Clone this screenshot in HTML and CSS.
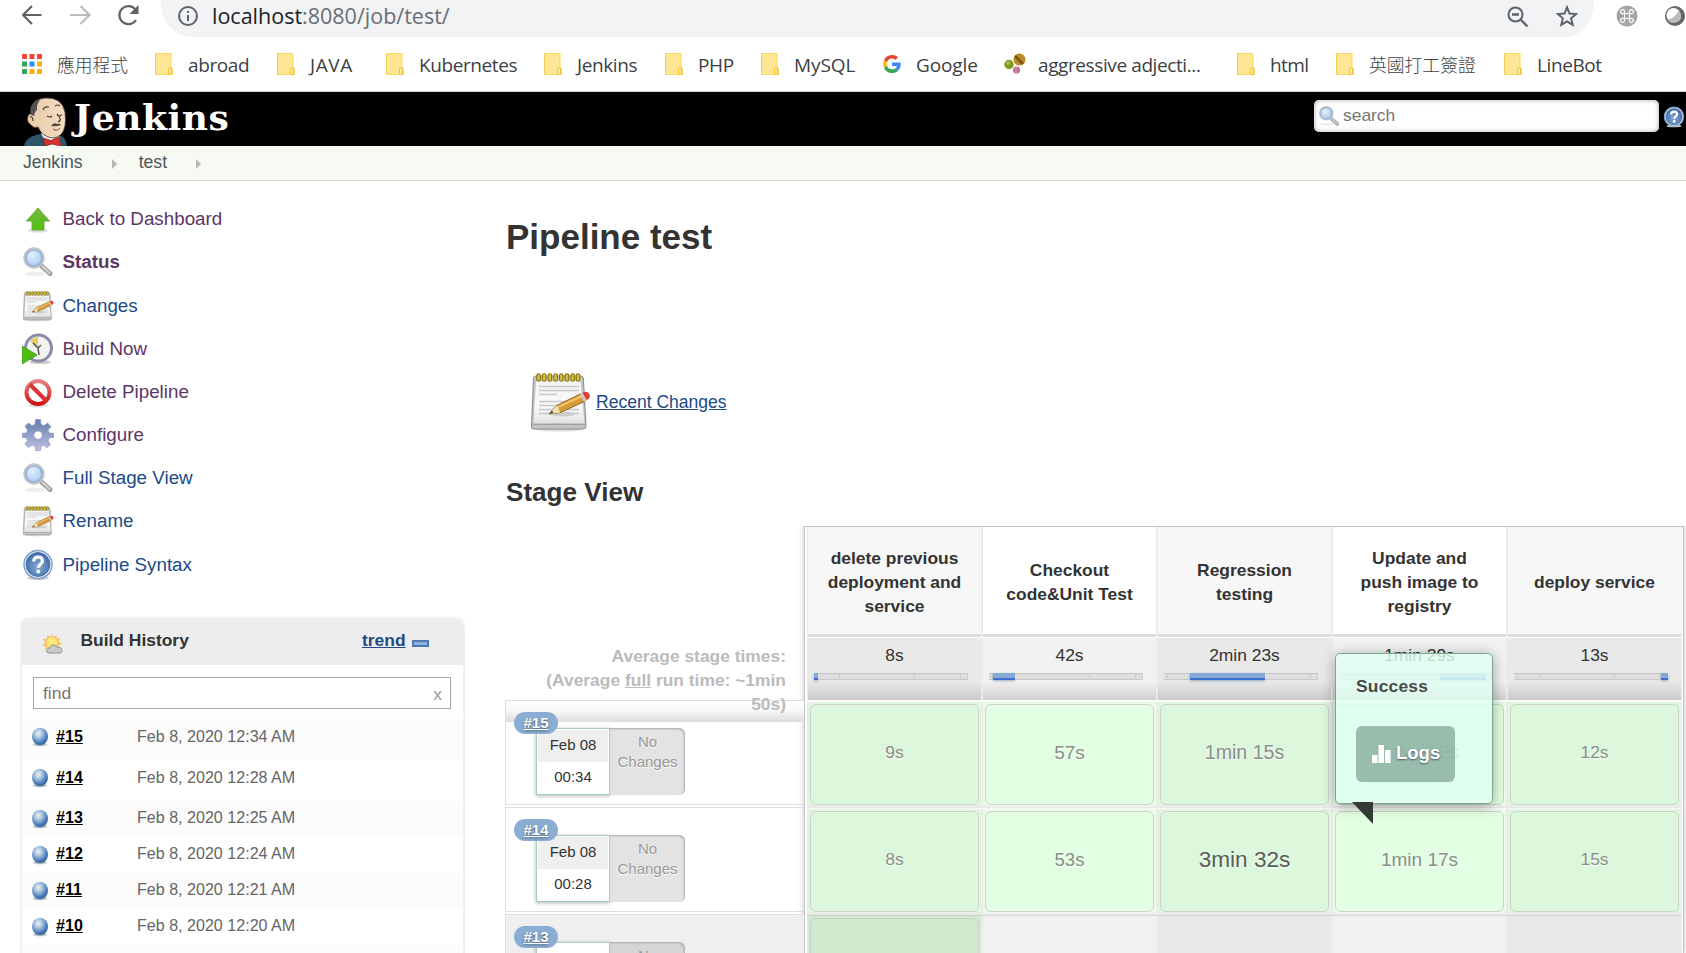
FILE: index.html
```html
<!DOCTYPE html>
<html lang="en">
<head>
<meta charset="utf-8">
<title>test [Jenkins]</title>
<link rel="stylesheet" href="styles.css">
</head>
<body>
<svg class="defs" width="0" height="0" aria-hidden="true">
  <defs>
    <linearGradient id="gUp" x1="0" y1="0" x2="0" y2="1"><stop offset="0" stop-color="#76b544"/><stop offset="1" stop-color="#4ec40c"/></linearGradient>
    <radialGradient id="gLens" cx=".4" cy=".35" r=".7"><stop offset="0" stop-color="#e3effb"/><stop offset="1" stop-color="#a4c6ea"/></radialGradient>
    <linearGradient id="gPage" x1="0" y1="0" x2="0" y2="1"><stop offset="0" stop-color="#f3f3f3"/><stop offset=".6" stop-color="#fbfbfb"/><stop offset="1" stop-color="#e2e2e2"/></linearGradient>
    <linearGradient id="gNo" x1="0" y1="0" x2="0" y2="1"><stop offset="0" stop-color="#e88080"/><stop offset="1" stop-color="#cf1111"/></linearGradient>
    <linearGradient id="gGear" x1="0" y1="0" x2="0" y2="1"><stop offset="0" stop-color="#5f7fae"/><stop offset="1" stop-color="#c3bfe0"/></linearGradient>
    <radialGradient id="gHelp" cx=".5" cy=".6" r=".6"><stop offset="0" stop-color="#84a9d6"/><stop offset="1" stop-color="#3d6ba6"/></radialGradient>
    <radialGradient id="gBall" cx=".4" cy=".33" r=".68"><stop offset="0" stop-color="#f0f0e6"/><stop offset=".35" stop-color="#a9c6e2"/><stop offset=".8" stop-color="#4577b6"/><stop offset="1" stop-color="#3766a5"/></radialGradient>
    <linearGradient id="gSkin" x1="0" y1="0" x2="1" y2="0"><stop offset="0" stop-color="#e8cba9"/><stop offset="1" stop-color="#f3dcc0"/></linearGradient>
    <symbol id="folder" viewBox="0 0 18 22"><path d="M.5.5h15.500v14l1.500 1v6H.5z" fill="#ffe694" stroke="#fbd75b"/><path d="M.5.5v21" stroke="#f0cc50"/><path d="M13.600 21.300v-5.200a1.400 1.400 0 0 1 2.800 0v5.200z" fill="#ffeeb0" stroke="#eec02f"/></symbol>
    <symbol id="search" viewBox="0 0 32 32"><ellipse cx="13" cy="28" rx="10" ry="2" fill="#eee"/><path d="M19.500 20l8.500 7.500" stroke="#999" stroke-width="5" stroke-linecap="round"/><path d="M20.500 20.500l7 6.500" stroke="#cfcfcf" stroke-width="2.500" stroke-linecap="round"/><circle cx="12" cy="12" r="9.500" fill="url(#gLens)" stroke="#c3c5c7" stroke-width="2.400"/><circle cx="12" cy="12" r="8" fill="none" stroke="#7fa7d8" stroke-width="1.200"/></symbol>
    <symbol id="notepad" viewBox="0 0 62 62"><ellipse cx="30" cy="58.500" rx="23" ry="2" fill="#ddd"/><path d="M7 5h45q2 0 2.300 2L57 55q0 3-3 3H5q-3 0-2.500-3L4.500 7Q5 5 7 5z" fill="#c4c4c4" stroke="#8a8a8a"/><path d="M7 10h44.500l4 42H4.500z" fill="url(#gPage)"/><path d="M4 53.500h52" stroke="#a0a0a0"/><path d="M10 15.500h40M10 19.500h40M10 23.500h18M10 30.500h33M10 34.500h26M10 38.500h17M10 42.500h16M36 38.500h14M34 42.500h16" stroke="#c8c8c8" stroke-width="1.500"/><path d="M9.500 4.500v4M15.200 4.500v4M20.900 4.500v4M26.600 4.500v4M32.300 4.500v4M38 4.500v4M43.700 4.500v4M49 4.500v4" stroke="#857311" stroke-width="4.600" stroke-linecap="round"/><path d="M9.500 4.500v4M15.200 4.500v4M20.900 4.500v4M26.600 4.500v4M32.300 4.500v4M38 4.500v4M43.700 4.500v4M49 4.500v4" stroke="#d6bf3c" stroke-width="2.500" stroke-linecap="round"/><ellipse cx="34" cy="43" rx="12" ry="2.500" fill="#ccc"/><path d="M20 43l7.500-8.500L52 22.800l4 7.400-25 11.500z" fill="#d49b3a" stroke="#94651c"/><path d="M29 36l24-11" stroke="#f1c66f" stroke-width="2"/><path d="M20 43l7.500-8.500 2 2.500 1.500 4.700z" fill="#f2dfab"/><path d="M20 43l3-3.300 1.300 2.400z" fill="#333"/><path d="M51 23.300l3-1.500 4 7.400-3 1.500z" fill="#c9c9c9"/><path d="M53.500 21.800q4-2.300 6.500.7 2.500 4-2.200 6.800z" fill="#e23d34"/></symbol>
    <symbol id="help" viewBox="0 0 32 32"><ellipse cx="16" cy="29" rx="11" ry="2" fill="#ccc"/><circle cx="16" cy="15.500" r="14" fill="#f4f8fc" stroke="#7fa0ca" stroke-width="1.500"/><circle cx="16" cy="15.500" r="12" fill="url(#gHelp)" stroke="#3c679f" stroke-width=".8"/><path d="M11.800 12.500q0-4.300 4.300-4.300t4.300 3.700c0 3.400-4 3.300-4 6.800" fill="none" stroke="#fff" stroke-width="3.200"/><circle cx="16.300" cy="22.500" r="2" fill="#fff"/></symbol>
    <symbol id="ball" viewBox="0 0 18 20"><ellipse cx="9" cy="17.500" rx="7" ry="1.800" fill="#aaa" opacity=".7"/><ellipse cx="9" cy="9.500" rx="8" ry="8.800" fill="url(#gBall)"/></symbol>
  </defs>
</svg>

<header class="browser">
  <div class="toolbar">
    <svg class="nav-icons" viewBox="0 0 130 30"><g fill="none" stroke-width="2.200"><path d="M19.500 15H1.500M10 6l-9 9 9 9" stroke="#5f6368"/><path d="M48 15h19M58.500 6l9 9-9 9" stroke="#bdbdbd"/><path d="M114 20a9 9 0 1 1-.6-10.500" stroke="#5f6368"/></g><path d="M116.500 5v9h-9z" fill="#5f6368"/></svg>
    <div class="omnibox">
      <svg class="info" viewBox="0 0 22 22"><circle cx="11" cy="11" r="9" fill="none" stroke="#5f6368" stroke-width="2"/><path d="M11 10v6M11 6v2" stroke="#5f6368" stroke-width="2"/></svg>
      <span class="url"><b>localhost</b>:8080/job/test/</span>
      <svg class="zoom" viewBox="0 0 22 22"><circle cx="8.500" cy="8.500" r="7" fill="none" stroke="#5f6368" stroke-width="2"/><path d="M5 8.500h7M13.500 13.500l7 7" stroke="#5f6368" stroke-width="2.300"/></svg>
      <svg class="star" viewBox="0 0 22 22"><path d="M11 2.300l2.500 6.200 6.700.5-5.100 4.300 1.600 6.500-5.700-3.500-5.700 3.500 1.600-6.500L1.800 9l6.700-.5z" fill="none" stroke="#5f6368" stroke-width="2"/></svg>
    </div>
    <svg class="ext" viewBox="0 0 22 22"><circle cx="11" cy="11" r="10.500" fill="#a5a5a5"/><path d="M8.500 8.500h5v5h-5zM8.500 8.500H7a2 2 0 1 1 1.500-1.500zM13.500 8.500V7A2 2 0 1 1 15 8.500zM13.500 13.500H15a2 2 0 1 1-1.500 1.500zM8.500 13.500V15A2 2 0 1 1 7 13.500z" fill="none" stroke="#fff" stroke-width="1.200"/></svg>
    <svg class="ext ring" viewBox="0 0 22 22"><circle cx="11" cy="11" r="10" fill="#666"/><circle cx="9.500" cy="10" r="7" fill="#fff"/><path d="M3 14Q10 15 15 5q6 11-5 13-5 0-7-4z" fill="#bbb"/></svg>
  </div>
  <nav class="bookmarks">
    <a class="bm apps"><svg viewBox="0 0 20 20"><path d="M0 0h5v5H0zM7.500 0h5v5h-5zM15 0h5v5h-5z" fill="#f4443a"/><path d="M0 7.500h5v5H0zM0 15h5v5H0z" fill="#35a35b"/><path d="M7.500 7.500h5v5h-5z" fill="#2a8cf5"/><path d="M15 7.500h5v5h-5zM7.500 15h5v5h-5zM15 15h5v5h-5z" fill="#fdb20a"/></svg><span>應用程式</span></a>
    <a class="bm b2"><svg><use href="#folder"/></svg><span>abroad</span></a>
    <a class="bm b3"><svg><use href="#folder"/></svg><span>JAVA</span></a>
    <a class="bm b4"><svg><use href="#folder"/></svg><span>Kubernetes</span></a>
    <a class="bm b5"><svg><use href="#folder"/></svg><span>Jenkins</span></a>
    <a class="bm b6"><svg><use href="#folder"/></svg><span>PHP</span></a>
    <a class="bm b7"><svg><use href="#folder"/></svg><span>MySQL</span></a>
    <a class="bm b8"><svg viewBox="0 0 18 18"><path d="M9 7.400v3.500h4.900c-.2 1.200-1 2.200-2 2.800l3 2.300c1.800-1.600 2.800-4 2.800-6.900 0-.6-.1-1.200-.2-1.700z" fill="#4285f4"/><path d="M1 13a9 9 0 0 0 13.900 3l-3-2.300A5.400 5.400 0 0 1 4 10.700z" fill="#34a853"/><path d="M1 5a9 9 0 0 0 0 8l3-2.300a5.400 5.400 0 0 1 0-3.400z" fill="#fbbc05"/><path d="M9 3.600c1.300 0 2.500.5 3.400 1.300L15 2.300A9 9 0 0 0 1 5l3 2.300a5.400 5.400 0 0 1 5-3.700z" fill="#ea4335"/></svg><span>Google</span></a>
    <a class="bm b9"><svg viewBox="0 0 22 22"><circle cx="5" cy="11.500" r="4.700" fill="#7d9a22"/><circle cx="4" cy="10" r="2" fill="#aebf52"/><circle cx="15.500" cy="6.500" r="6" fill="#b98b22"/><path d="M11 3l8 8" stroke="#7a5613" stroke-width="2.500"/><circle cx="12.500" cy="17" r="3.600" fill="#bf6f96"/><path d="M12 13.500v7" stroke="#e0a5c0"/></svg><span>aggressive adjecti...</span></a>
    <a class="bm b10"><svg><use href="#folder"/></svg><span>html</span></a>
    <a class="bm b11"><svg><use href="#folder"/></svg><span>英國打工簽證</span></a>
    <a class="bm b12"><svg><use href="#folder"/></svg><span>LineBot</span></a>
  </nav>
</header>

<div class="masthead">
  <svg class="butler" viewBox="0 0 44 49"><path d="M0 49q1-8 12-11l8-2 8 4 9-1q5 2 6 10z" fill="#2f5368"/><path d="M17 36l6 13h14l-2-11z" fill="#f4f4f4"/><path d="M7 28Q2 25 4 19q1-3 3-2Q6 2 21 1q17-1 20 14 1 9 0 14-2 11-12 12Q18 40 14 30q-4 2-7-2z" fill="url(#gSkin)" stroke="#44382e" stroke-width=".8"/><path d="M7 18Q4 9 12 4l5-2.500Q12 8 13 13q-3 2-2.500 6z" fill="#555052"/><path d="M6 20q3-1 3 4M19 13q1-4 6-3M31 9q3-2 5 0M23 19q3 2 5 0M33 18q3 2 5-.5M33 17q6 6 1 8" fill="none" stroke="#4f3d30" stroke-width="1.200"/><path d="M27 29q3-4 6-2 3-1 4 1-5 2-10 1z" fill="#51463f"/><path d="M29 32q4 3 7-1" fill="none" stroke="#704a3a"/><path d="M19 41l8 2.500 8-3.500 2 9-9-2-7 2z" fill="#d5332d" stroke="#7c1613" stroke-width=".7"/></svg>
  <span class="wordmark">Jenkins</span>
  <div class="searchbox"><svg><use href="#search"/></svg><span>search</span></div>
  <svg class="mast-help"><use href="#help"/></svg>
</div>
<div class="crumbs"><span>Jenkins</span><i></i><span>test</span><i></i></div>

<div class="page">
  <aside class="side">
    <ul class="tasks">
      <li class="visited"><svg viewBox="0 0 32 32"><ellipse cx="16" cy="27.500" rx="10" ry="2" fill="#ddd"/><path d="M16 5l11.500 13H22v9H10v-9H4.500z" fill="url(#gUp)" stroke="#72a94b"/></svg>Back to Dashboard</li>
      <li class="visited current"><svg><use href="#search"/></svg>Status</li>
      <li class="low"><svg><use href="#notepad"/></svg>Changes</li>
      <li class="visited low"><svg viewBox="0 0 32 32"><ellipse cx="18" cy="29" rx="11" ry="2" fill="#ccc"/><circle cx="16.500" cy="15" r="13" fill="#f2f2ee" stroke="#8a8bad" stroke-width="3"/><path d="M16 15L8 8q4-4 8-4z" fill="#e5cc6b"/><path d="M16 15l-5-5M16 15l3-3M16 15l1 7" stroke="#555" stroke-width="1.500"/><path d="M0 13l15 9-15 9z" fill="#50bd15" stroke="#479b20"/></svg>Build Now</li>
      <li class="visited"><svg viewBox="0 0 32 32"><ellipse cx="16" cy="29.500" rx="10" ry="2" fill="#ddd"/><circle cx="16" cy="16.500" r="11.500" fill="#fff" stroke="url(#gNo)" stroke-width="4"/><path d="M8 8.500l16 16" stroke="#d93434" stroke-width="4"/></svg>Delete Pipeline</li>
      <li class="visited"><svg viewBox="0 0 32 32"><path fill-rule="evenodd" d="M13.500.5h5l.5 5 3 1.200L25.500 4 29 7.500 26 11l1.200 3 4.600.3v4l-4.600.7L26 22l2.500 3.500L25 28.500 21.500 26l-2.500 1-.7 4.500h-4.500L13 27l-3-1-3.500 2.500L3 25l2.500-3.500L4.500 19 .3 18.300v-4L4.600 14l1-3L3 7.500 6.500 4 10 6.700l3-1.200zM16 12a4.200 4.200 0 1 0 .1 0z" fill="url(#gGear)" stroke="#8f9ac4" stroke-width=".8"/></svg>Configure</li>
      <li><svg><use href="#search"/></svg>Full Stage View</li>
      <li><svg><use href="#notepad"/></svg>Rename</li>
      <li><svg><use href="#help"/></svg>Pipeline Syntax</li>
    </ul>
    <section class="history">
      <div class="history-head">
        <svg class="weather" viewBox="0 0 22 22"><path d="M10 0l1.500 3.500L15 1.500l.5 4 4-.5-2 3.500L21 11l-4 1.500 1 4H3l1-3L0 12l3.300-2.500L1 6l4-.5L5.500 2 9 3.500z" fill="#f6c56a"/><circle cx="10.500" cy="9.500" r="5.500" fill="#fde878"/><path d="M7 20.500q-3-.5-2-3.500 1-2 3-1.500 1-4 4.500-3.500 3 .5 3.500 2.500 5-.5 5 3.500 0 2-2 2.500z" fill="#c9c9c7" stroke="#92928f"/></svg>
        <h2>Build History</h2><a class="trend">trend</a><i class="dash"></i>
      </div>
      <div class="find"><span>find</span><span class="clear">x</span></div>
      <div class="build tall"><svg><use href="#ball"/></svg><a>#15</a><time>Feb 8, 2020 12:34 AM</time></div>
      <div class="build tall"><svg><use href="#ball"/></svg><a>#14</a><time>Feb 8, 2020 12:28 AM</time></div>
      <div class="build"><svg><use href="#ball"/></svg><a>#13</a><time>Feb 8, 2020 12:25 AM</time></div>
      <div class="build"><svg><use href="#ball"/></svg><a>#12</a><time>Feb 8, 2020 12:24 AM</time></div>
      <div class="build"><svg><use href="#ball"/></svg><a>#11</a><time>Feb 8, 2020 12:21 AM</time></div>
      <div class="build"><svg><use href="#ball"/></svg><a>#10</a><time>Feb 8, 2020 12:20 AM</time></div>
      <div class="build last"></div>
    </section>
  </aside>

  <main class="main">
    <h1>Pipeline test</h1>
    <div class="recent"><svg><use href="#notepad"/></svg><a>Recent Changes</a></div>
    <h2 class="stage-title">Stage View</h2>
    <div class="stages">
      <div class="runs">
        <div class="averages">Average stage times:<br>(Average <u>full</u> run time: ~1min<br>50s)</div>
        <div class="run first"><span class="badge">#15</span><div class="start"><span>Feb 08</span><span>00:34</span></div><div class="nochange">No<br>Changes</div></div>
        <div class="run"><span class="badge">#14</span><div class="start"><span>Feb 08</span><span>00:28</span></div><div class="nochange">No<br>Changes</div></div>
        <div class="run dim"><span class="badge">#13</span><div class="start"></div><div class="nochange">No</div></div>
      </div>
      <div class="table">
        <div class="th odd">delete previous<br>deployment and<br>service</div>
        <div class="th">Checkout<br>code&amp;Unit Test</div>
        <div class="th odd">Regression<br>testing</div>
        <div class="th">Update and<br>push image to<br>registry</div>
        <div class="th odd">deploy service</div>

        <div class="avg odd">8s<div class="bar"><i style="width:4px"></i><b style="width:22px"></b><b style="width:75px"></b><b style="width:46px"></b><b style="width:7px"></b></div></div>
        <div class="avg">42s<div class="bar"><b style="width:4px"></b><i style="width:22px"></i><b style="width:75px"></b><b style="width:46px"></b><b style="width:7px"></b></div></div>
        <div class="avg odd">2min 23s<div class="bar"><b style="width:4px"></b><b style="width:22px"></b><i style="width:75px"></i><b style="width:46px"></b><b style="width:7px"></b></div></div>
        <div class="avg">1min 29s<div class="bar"><b style="width:4px"></b><b style="width:22px"></b><b style="width:75px"></b><i style="width:46px"></i><b style="width:7px"></b></div></div>
        <div class="avg odd">13s<div class="bar"><b style="width:4px"></b><b style="width:22px"></b><b style="width:75px"></b><b style="width:46px"></b><i style="width:7px"></i></div></div>

        <div class="cell odd"><span class="s1">9s</span></div>
        <div class="cell"><span class="s3">57s</span></div>
        <div class="cell odd"><span class="s4">1min 15s</span></div>
        <div class="cell"><span class="s4">1min 12s</span>
          <div class="popup"><strong>Success</strong><a class="logs"><svg viewBox="0 0 19 19"><path d="M0 11h5.500v8H0zM6.500 1H12v18H6.500zM13 6h5.500v13H13z" fill="#fff"/></svg>Logs</a><svg class="tail" viewBox="0 0 21 22"><path d="M0 0h21v22z" fill="#343b37"/></svg></div>
        </div>
        <div class="cell odd"><span class="s1">12s</span></div>

        <div class="cell odd"><span class="s1">8s</span></div>
        <div class="cell"><span class="s2">53s</span></div>
        <div class="cell odd"><span class="s5">3min 32s</span></div>
        <div class="cell"><span class="s3">1min 17s</span></div>
        <div class="cell odd"><span class="s1">15s</span></div>

        <div class="cell next odd"><span class="s1"></span></div>
        <div class="cell none"></div>
        <div class="cell none odd"></div>
        <div class="cell none"></div>
        <div class="cell none odd"></div>
      </div>
    </div>
  </main>
</div>
</body>
</html>
```
FILE: styles.css
```css
* { box-sizing: border-box; }
html, body { margin: 0; height: 953px; overflow: hidden; background: #fff; }
body { font-family: "Liberation Sans", Arial, sans-serif; font-size: 17.42px; color: #333; }
svg { display: block; flex: none; }
.defs { position: absolute; }
h1, h2, ul { margin: 0; padding: 0; }

/* Browser chrome */
.browser { height: 92px; border-bottom: 1px solid #d4d4d4; font-family: "Open Sans", "Noto Sans CJK TC", sans-serif; }
.toolbar { height: 37px; display: flex; }
.nav-icons { width: 130px; height: 30px; margin-left: 22px; }
.omnibox { width: 1433px; margin-left: 9px; height: 37px; background: #f1f3f4; border-radius: 0 0 30px 30px / 0 0 34px 34px; display: flex; align-items: flex-start; padding-left: 16px; }
.info { width: 22px; height: 22px; margin-top: 5px; }
.url { width: 1308px; padding-left: 13px; font-size: 21.5px; line-height: 32px; color: #6a6e73; }
.url b { font-weight: 400; color: #202124; }
.zoom { width: 22px; height: 22px; margin-top: 6px; }
.star { width: 22px; height: 22px; margin: 5px 0 0 27px; }
.ext { width: 22px; height: 22px; margin: 5px 0 0 22px; }
.ring { margin-left: 26px; }
.bookmarks { display: flex; height: 54px; align-items: center; padding-left: 22px; }
.bm { display: flex; align-items: center; flex: none; font-size: 19px; line-height: 28px; color: #3c4043; white-space: nowrap; letter-spacing: -.4px; }
.bm svg { width: 18px; height: 22px; margin-right: 15px; }
.bm span { margin-top: 1px; }
.apps { width: 133px; font-weight: 300; letter-spacing: 0; }
.apps svg { width: 20px; height: 20px; }
.apps span, .b11 span { font-size: 17.8px; }
.b2 { width: 122px; }
.b3 { width: 109px; letter-spacing: .6px; }
.b4 { width: 158px; }
.b5 { width: 121px; }
.b6 { width: 96px; }
.b7 { width: 122px; letter-spacing: -.1px; }
.b8 { width: 121px; letter-spacing: -.1px; }
.b9 { width: 233px; }
.b9 svg { width: 22px; margin-right: 12px; }
.b10 { width: 99px; letter-spacing: -.6px; }
.b11 { width: 168px; font-weight: 300; letter-spacing: 0; }

/* Jenkins header */
.masthead { height: 54px; background: #000; display: flex; padding-left: 24px; }
.butler { width: 44px; height: 49px; margin-top: 5px; }
.wordmark { width: 1246px; padding-left: 6px; font: bold 36px/50px "DejaVu Serif", serif; color: #fff; letter-spacing: .6px; }
.searchbox { width: 345px; height: 32px; margin-top: 8px; border-radius: 5px; background: #fff; box-shadow: inset 0 0 5px #aaa; display: flex; padding: 4px 0 0 4px; color: #757575; line-height: 22px; }
.searchbox svg { width: 22px; height: 22px; margin: 1px 3px 0 0; }
.mast-help { width: 22px; height: 22px; margin: 14px 0 0 4px; }
.crumbs { height: 35px; background: #f6faf2; border-bottom: 1px solid #d3d7cf; display: flex; align-items: center; padding: 0 0 1px 23px; font-size: 17.6px; color: #4d545d; }
.crumbs i { width: 0; height: 0; border: 5px solid transparent; border-left-color: #b5b8b4; border-right: 0; margin: 2px 22px 0 29px; }

.page { display: flex; }
.side { width: 506px; padding: 16px 0 0 20px; }
.tasks { list-style: none; font-size: 18.8px; color: #204a87; height: 420px; }
.tasks li { height: 43.25px; display: flex; align-items: center; }
.tasks .low { padding-top: 2px; }
.tasks svg { width: 32px; height: 32px; margin: 0 8.500px 0 2px; }
.tasks .visited { color: #5c3566; }
.current { font-weight: bold; }
.history { width: 445px; border: 2px solid #f1f1f1; border-bottom: 0; border-radius: 8px 8px 0 0; }
.history-head { height: 46px; background: #ededed; border-radius: 6px 6px 0 0; display: flex; align-items: center; padding: 0 0 3px 20px; }
.weather { width: 21px; height: 22px; margin-top: 6px; }
.history-head h2 { flex: none; font-size: 17.42px; width: 299px; padding-left: 17.500px; }
.trend { font-weight: bold; color: #204a87; text-decoration: underline; }
.dash { width: 17px; height: 7px; margin: 5px 0 0 6px; background: #8fb2dc; border: 2px solid #4d7ab5; }
.find { width: 418px; height: 32px; margin: 12px 0 10px 11px; border: 1px solid #a6a6a6; display: flex; justify-content: space-between; padding: 0 8px 0 9px; line-height: 30px; color: #757575; }
.clear { color: #999; margin-top: 1px; }
.build { height: 36px; display: flex; font-size: 16.08px; line-height: 20px; padding: 6px 0 0 9px; color: #666; }
.build.tall { height: 41px; padding-top: 7px; }
.build.last { height: 8px; }
.build:nth-of-type(odd) { background: #fbfbfb; }
.build svg { width: 18px; height: 20px; margin: 2px 7px 0 0; }
.build.tall svg { margin-top: 1px; }
.build a { width: 81px; font-weight: bold; color: #000; text-decoration: underline; }

/* Main column */
.main { width: 1180px; flex: none; }
h1 { font-size: 35px; line-height: 40px; padding-top: 36px; height: 190px; }
.recent { display: flex; height: 62px; margin-left: 23px; align-items: center; }
.recent svg { width: 62px; height: 62px; margin-right: 5px; }
.recent a { font-size: 17.55px; color: #204a87; text-decoration: underline; }
.stage-title { font-size: 26.1px; line-height: 30px; padding-top: 44px; height: 93px; }
.stages { display: flex; margin-left: -1px; height: 427px; overflow: hidden; }
.runs { width: 299px; }
.averages { height: 174px; padding: 118px 18px 0 0; text-align: right; font-weight: bold; color: #bbb; line-height: 24px; position: relative; z-index: 1; white-space: nowrap; }
.run { height: 105px; margin-bottom: 2px; border: 1px solid #dedede; border-right: 0; padding: 27px 0 0 30px; display: flex; position: relative; }
.run.first { background: linear-gradient(#fff, #fafafa 40%, #ddd) no-repeat 0 0 / 100% 21px; }
.run.dim { background: #efefef; height: 39px; margin: 0; border-bottom: 0; }
.badge { position: absolute; left: 8px; top: 11px; width: 44px; height: 22px; border-radius: 11px; background: #8aadd3; color: #fff; font-weight: bold; font-size: 15px; line-height: 22px; text-align: center; text-decoration: underline; text-shadow: 0 1px 2px #456; }
.start { width: 74px; height: 67px; border: 1px solid #a3cfb8; background: #fff; box-shadow: 0 1px 4px rgba(0,0,0,.3); display: flex; flex-direction: column; text-align: center; font-size: 15px; line-height: 30px; padding: 1px; }
.start span { height: 32px; }
.start span:first-child { background: #efefef; }
.nochange { width: 75px; height: 67px; border-radius: 0 6px 6px 0; background: #e3e3e3; box-shadow: inset -1px 1px 2px #aaa; text-align: center; color: #999; font-size: 15px; line-height: 20px; padding-top: 4px; text-shadow: 0 1px 1px #fff; }
.dim .nochange { background: #d5d5d5; }
.table { width: 880px; height: 427px; flex: none; border: 1px solid #c4c4c4; border-bottom: 0; box-shadow: 0 0 6px rgba(0,0,0,.25); display: grid; grid-template-columns: repeat(5, 175px); grid-template-rows: 110px 64px 107px 107px 38px; padding-left: 2px; background: #fff; }
.table > div { border-left: 1px solid #e8e8e8; border-right: 1px solid #eee; }
.th { display: flex; align-items: center; justify-content: center; text-align: center; font-weight: bold; line-height: 24px; box-shadow: inset 0 -3px #ddd; }
.table .th.odd { background: #f7f7f7; }
.avg { background: linear-gradient(#f2f2f2 70%, #d0d0d0); text-align: center; line-height: 20px; padding: 7px 6px 0; height: 62px; margin-top: 1px; }
.avg.odd { background: linear-gradient(#e9e9e9 70%, #cacaca); }
.bar { width: 154px; height: 7px; margin-top: 8px; display: flex; }
.bar b { background: #dedede; border-top: 1px solid #c4c4c4; border-bottom: 1px solid #c8c8c8; border-right: 1px solid #ccc; }
.bar i { background: linear-gradient(#86aad6 65%, #3e6fd0 75%); box-shadow: 0 1px 3px #9ab; }
.cell { background: #eafbe9; border-top: 1px solid #f8f8f8; border-bottom: 2px solid #ebe8eb; padding: 2px; position: relative; }
.cell > span { display: flex; align-items: center; justify-content: center; width: 169px; height: 101px; border: 1px solid #ccd3ca; border-radius: 6px; background: #e3ffe3; color: #878f87; text-shadow: 0 1px 2px #fff; padding-bottom: 4px; }
.cell.odd { background: #e2f5e1; }
.cell.odd > span { background: #ddf7dc; }
.table .cell.next { background: #d3e8d3; border-top-color: #ccc; border-bottom: 0; overflow: hidden; }
.cell.next > span { background: #d0ead0; }
.table .cell.none { background: #f1f1f1; border-top-color: #d5d5d5; border-bottom: 0; }
.table .cell.none.odd { background: #e8e8e8; }
.cell .s1 { font-size: 17.4px; }
.cell .s2 { font-size: 18.5px; }
.cell .s3 { font-size: 19px; }
.cell .s4 { font-size: 19.6px; }
.cell .s5 { font-size: 22.6px; color: #565f57; }

/* Stage details popup */
.popup { position: absolute; left: 2px; top: -49px; width: 158px; height: 151px; z-index: 2; border: 1px solid #78a98a; border-radius: 5px; background: rgba(225,255,242,.82); box-shadow: 0 2px 14px rgba(0,0,0,.35); padding: 21px 20px; }
.popup strong { display: block; line-height: 22px; height: 51px; color: #484848; letter-spacing: .2px; }
.logs { display: flex; align-items: center; width: 99px; height: 56px; border-radius: 6px; background: rgba(118,157,140,.68); color: #fff; font-weight: bold; font-size: 18.5px; padding: 0 0 2px 16px; text-shadow: 0 1px 2px #456; }
.logs svg { width: 19px; height: 19px; margin-right: 5px; }
.tail { position: absolute; left: 16px; top: 148px; width: 21px; height: 22px; }
```
